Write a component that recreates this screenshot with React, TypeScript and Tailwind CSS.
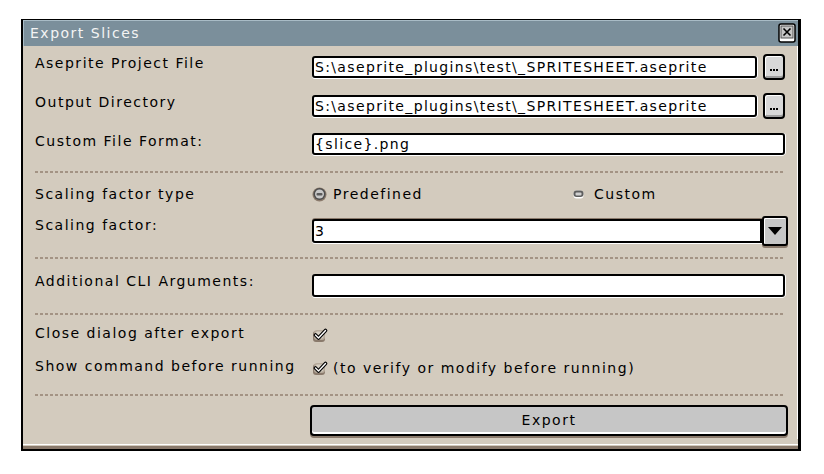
import React from "react"

const font = "font-['DejaVu_Sans',sans-serif] text-[14px] leading-[16px] tracking-[1.5px] text-black"

function Sep() {
  return <div className="h-[2px] mr-[3px] bg-[repeating-linear-gradient(90deg,#a39384_0_3px,transparent_3px_5px)]" />
}

function Field({ value, className = "" }: { value?: string; className?: string }) {
  return (
    <div className={"h-[22px] flex items-center bg-white border-2 border-black rounded-[3px] px-[1px] shadow-[0_1px_0_#fff,1px_0_0_#fff] overflow-hidden whitespace-nowrap tracking-[1.35px] " + className}>
      {value}
    </div>
  )
}

function DotsButton() {
  return (
    <div className="w-[22px] h-[26px] ml-[6px] bg-[#d8d8d8] border-2 border-black rounded-[4px] shadow-[inset_1px_1px_0_#fff,inset_0_-2px_0_#a0a0a0] flex items-end justify-center pb-[7px]">
      <div className="flex gap-[1px]">
        <span className="w-[2px] h-[2px] bg-black" />
        <span className="w-[2px] h-[2px] bg-black" />
        <span className="w-[2px] h-[2px] bg-black" />
      </div>
    </div>
  )
}

function RadioOn() {
  return (
    <svg width="15" height="15" viewBox="0 0 15 15" className="shrink-0">
      <circle cx="7.5" cy="7.5" r="7" fill="#8a7a6c" />
      <circle cx="7.5" cy="7" r="6" fill="#4d4d4d" />
      <circle cx="7.5" cy="7" r="4.5" fill="#c8c8c8" />
      <rect x="4.5" y="6" width="6" height="2.5" rx="1" fill="#5a5a5a" />
    </svg>
  )
}

function RadioOff() {
  return (
    <svg width="11" height="9" viewBox="0 0 11 9" className="shrink-0">
      <rect x="0.5" y="0.5" width="10" height="8" rx="3" fill="#fff" />
      <rect x="0.5" y="0.5" width="10" height="6.5" rx="3" fill="#5e5e5e" />
      <rect x="2.5" y="2.5" width="6" height="3" rx="1" fill="#d0d0d0" />
    </svg>
  )
}

function Check() {
  return (
    <svg width="15" height="14" viewBox="0 0 15 14" className="shrink-0">
      <rect x="0" y="3" width="12" height="11" rx="3" fill="#8a7a6c" />
      <rect x="1" y="2" width="11" height="10" rx="3" fill="#b7ab9c" />
      <rect x="2.5" y="3.5" width="8" height="7" rx="2" fill="#d6cfc3" />
      <path d="M2.5 7 L5.5 10 L12.5 2.5" fill="none" stroke="#000" strokeWidth="3.6" strokeLinecap="round" strokeLinejoin="round" />
      <path d="M2.5 7 L5.5 10 L12.5 2.5" fill="none" stroke="#fff" strokeWidth="1.4" strokeLinecap="round" strokeLinejoin="round" />
    </svg>
  )
}

function CloseBox() {
  return (
    <svg width="18" height="20" viewBox="0 0 18 20">
      <rect x="1" y="1" width="16" height="18" rx="2" fill="#fff" stroke="#000" strokeWidth="1.5" />
      <rect x="3" y="3" width="12" height="12" fill="#c6c6c6" stroke="#555" strokeWidth="1" />
      <path d="M5.5 5.5 L12.5 12.5 M12.5 5.5 L5.5 12.5" stroke="#000" strokeWidth="1.6" />
    </svg>
  )
}

export default function App() {
  return (
    <div className={"w-[824px] h-[474px] bg-white pt-[19px] pl-[21px] " + font}>
      <div className="w-[780px] h-[432px] border-2 border-black border-t border-r-[3px] flex flex-col bg-[#d3cbbe]">
        <div className="h-[26px] bg-[#7b8f9b] shadow-[inset_1px_1px_0_#a9bcc6] flex items-center justify-between pl-[7px] pr-[2px] text-[#f4f4f4]">
          <span>Export Slices</span>
          <CloseBox />
        </div>

        <div className="flex-1 flex flex-col pl-[12px] pr-[9px] border-r border-white">
          <div className="flex items-start mt-[8px]">
            <div className="w-[277px] pt-[1px]">Aseprite Project File</div>
            <div className="flex-1 flex items-center">
              <Field value="S:\aseprite_plugins\test\_SPRITESHEET.aseprite" className="flex-1" />
              <DotsButton />
              <div className="w-[3px]" />
            </div>
          </div>

          <div className="flex items-start mt-[13px]">
            <div className="w-[277px] pt-[1px]">Output Directory</div>
            <div className="flex-1 flex items-center">
              <Field value="S:\aseprite_plugins\test\_SPRITESHEET.aseprite" className="flex-1" />
              <DotsButton />
              <div className="w-[3px]" />
            </div>
          </div>

          <div className="flex items-start mt-[12px] h-[26px]">
            <div className="w-[277px] pt-[2px]">Custom File Format:</div>
            <div className="flex-1 flex items-center h-[26px] pr-[3px]">
              <Field value="{slice}.png" className="flex-1" />
            </div>
          </div>

          <div className="mt-[14px]"><Sep /></div>

          <div className="flex items-center mt-[13px] h-[16px]">
            <div className="w-[277px]">Scaling factor type</div>
            <div className="flex-1 flex items-center">
              <div className="w-[261px] flex items-center gap-[6px]">
                <RadioOn />
                <span>Predefined</span>
              </div>
              <div className="flex items-center gap-[10px]">
                <RadioOff />
                <span>Custom</span>
              </div>
            </div>
          </div>

          <div className="flex items-start mt-[14px]">
            <div className="w-[277px] pt-[1px]">Scaling factor:</div>
            <div className="flex-1 flex items-center h-[30px]">
              <div className="flex-1 h-[24px] bg-white border-2 border-black rounded-l-[3px] shadow-[0_-1px_0_#8a7a6c,0_1px_0_#fff] flex items-center px-[1px]">3</div>
              <div className="w-[26px] h-[30px] bg-[#c6c6c6] border-2 border-black rounded-[3px] shadow-[inset_1px_1px_0_#fff,0_2px_0_#8a7a6c] flex items-center justify-center">
                <svg width="14" height="8" viewBox="0 0 14 8"><path d="M0 0 H14 L7 8 Z" fill="#000" /></svg>
              </div>
            </div>
          </div>

          <div className="mt-[11px]"><Sep /></div>

          <div className="flex items-start mt-[14px] h-[26px]">
            <div className="w-[277px]">Additional CLI Arguments:</div>
            <div className="flex-1 flex items-start pt-[1px] pr-[3px]">
              <Field className="flex-1 h-[23px]" />
            </div>
          </div>

          <div className="mt-[14px]"><Sep /></div>

          <div className="flex items-center mt-[10px] h-[16px]">
            <div className="w-[277px]">Close dialog after export</div>
            <div className="flex items-center pt-[4px] pl-[1px]"><Check /></div>
          </div>

          <div className="flex items-center mt-[17px] h-[16px]">
            <div className="w-[277px] whitespace-nowrap">Show command before running</div>
            <div className="flex items-center gap-[5px] pl-[1px]">
              <div className="pt-[4px]"><Check /></div>
              <span className="pt-[3px]">(to verify or modify before running)</span>
            </div>
          </div>

          <div className="mt-[20px]"><Sep /></div>

          <div className="flex mt-[9px]">
            <div className="w-[275px]" />
            <div className="flex-1 h-[31px] bg-[#c6c6c6] border-2 border-black rounded-[4px] shadow-[inset_0_-2px_0_#fff,0_2px_0_#8a7a6c] flex items-center justify-center pb-[2px]">
              Export
            </div>
          </div>
        </div>

        <div className="h-px bg-white mt-[5px]" />
        <div className="h-[3px] bg-[#8a7a6c] mt-px" />
      </div>
    </div>
  )
}
